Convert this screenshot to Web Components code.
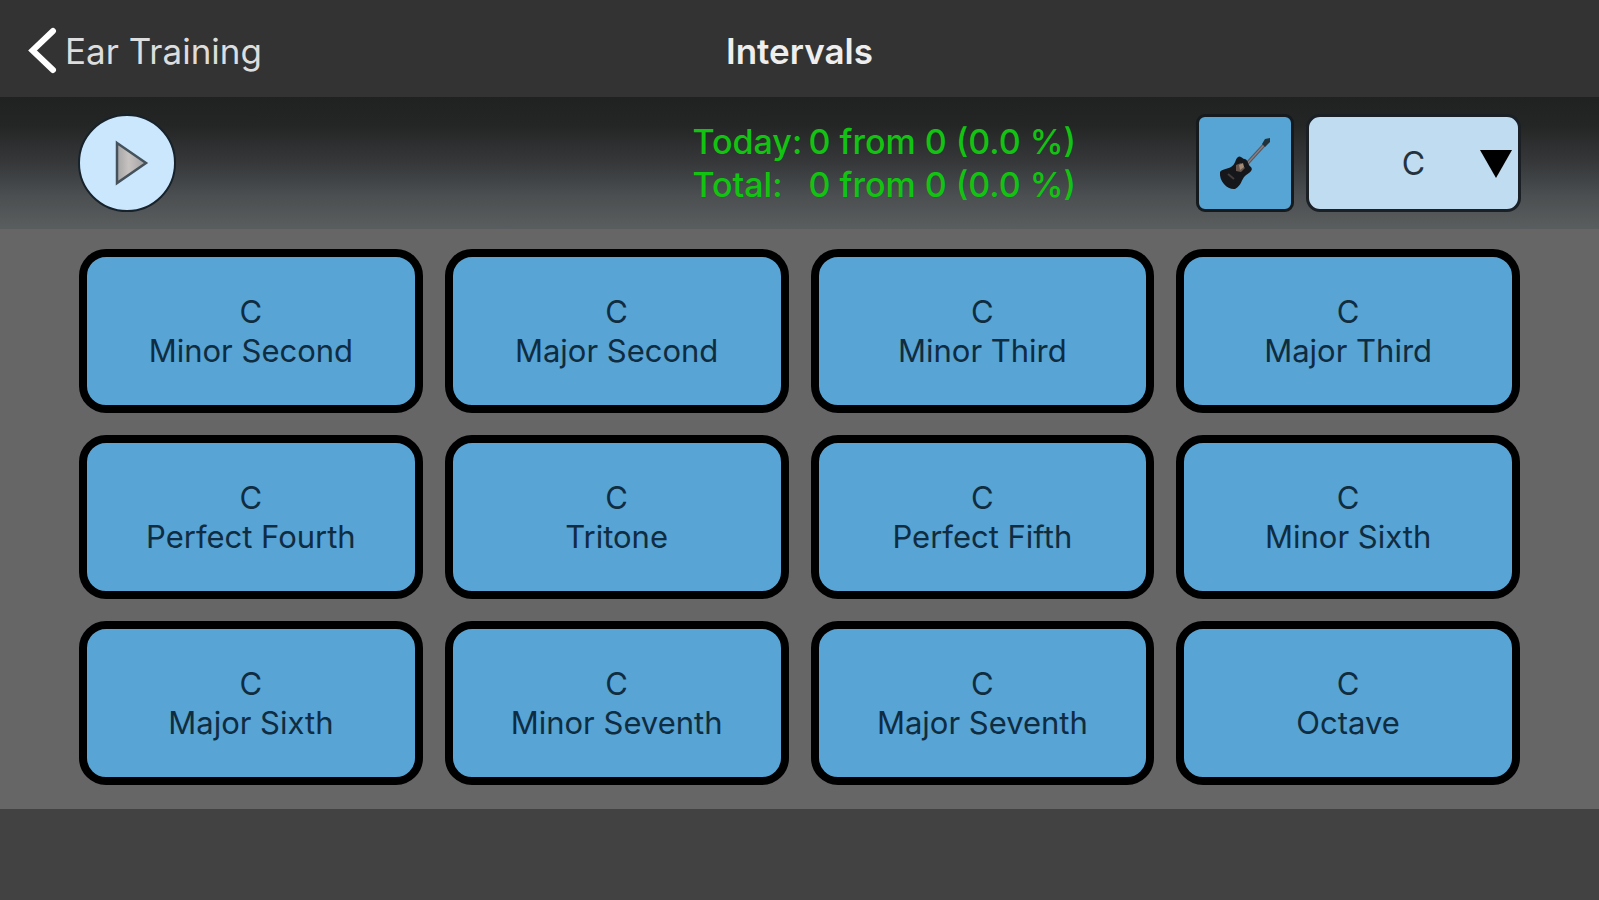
<!DOCTYPE html>
<html lang="en">
<head>
<meta charset="utf-8">
<title>Intervals</title>
<style>
html, body { margin: 0; background: #424242; }
body { font-family: Inter, "Liberation Sans", sans-serif; }
</style>
</head>
<body>
<ear-app></ear-app>

<script>
function define(name, html, setup) {
  const template = document.createElement('template');
  template.innerHTML = html;
  customElements.define(name, class extends HTMLElement {
    constructor() {
      super();
      this.attachShadow({ mode: 'open' }).append(template.content.cloneNode(true));
      if (setup) setup(this);
    }
  });
}

define('nav-bar', `
  <style>
    :host { display: grid; grid-template-columns: 1fr auto 1fr; align-items: center;
      height: 97px; padding: 4px 28px 0; box-sizing: border-box; background: #333; color: #eee; }
    a { display: flex; align-items: center; gap: 7px; justify-self: start;
      color: #ddd; text-decoration: none; font-size: 35px; line-height: 44px; }
    svg { width: 30px; height: 48px; }
    h1 { margin: 0; font-size: 35px; line-height: 44px; font-weight: 600; }
  </style>
  <a href="#ear-training">
    <svg viewBox="0 0 30 48" aria-hidden="true"><path d="M25 4 4.500 23.500 25 43" fill="none" stroke="#fff" stroke-width="6" stroke-linecap="round"/></svg>
    <slot name="back"></slot>
  </a>
  <h1><slot></slot></h1>
`);

define('play-button', `
  <style>
    :host { display: block; }
    button { display: grid; place-items: center; width: 98px; height: 98px; padding: 0;
      border: 2px solid #17222b; border-radius: 50%; background: #cbe7fd; }
    svg { width: 94px; height: 94px; }
  </style>
  <button type="button" aria-label="Play">
    <svg viewBox="0 0 94 94" aria-hidden="true">
      <defs><linearGradient id="g"><stop offset="0" stop-color="#a5a5a5"/><stop offset=".4" stop-color="#c6c2c0"/><stop offset="1" stop-color="#a2a2a2"/></linearGradient></defs>
      <path d="M37 27 66 47 37 67Z" fill="url(#g)" stroke="#45525b" stroke-width="2.500"/>
    </svg>
  </button>
`);

define('score-board', `
  <style>
    :host { display: block; color: #12c312; font-size: 34px; font-weight: 500; line-height: 43px; }
    dl { display: grid; grid-template-columns: 116px auto; margin: 0; white-space: nowrap; }
    dd { margin: 0; }
  </style>
  <dl>
    <dt>Today:</dt><dd>0 from 0 (0.0 %)</dd>
    <dt>Total:</dt><dd>0 from 0 (0.0 %)</dd>
  </dl>
`);

define('instrument-button', `
  <style>
    :host { display: block; }
    button { display: grid; place-items: center; width: 98px; height: 98px; padding: 0;
      border: 3px solid #151a1e; border-radius: 9px; background: #57a5d5; }
    svg { width: 92px; height: 92px; }
  </style>
  <button type="button" aria-label="Guitar">
    <svg viewBox="0 0 92 92" aria-hidden="true">
      <path d="M44 51 66 27" stroke="#56595f" stroke-width="3.500"/>
      <path d="M45 50 65 28" stroke="#8c7f84" stroke-width="1.200"/>
      <path d="M63 27 66 22 71 21 71 25 66 30Z" fill="#22333c"/>
      <path d="M21 55C23 52 28 52 32 50 37 47 36 42 39 40 42 38 43 42 46 42 50 44 48 47 52 50 55 54 49 56 46 59 42 63 43 68 36 72 29 73 20 65 21 55Z" fill="#15171a"/>
      <path d="M37 48 42 46 46 51 42 55 37 54Z" fill="#66564d"/>
      <path d="M40 48 44 46 45 50 41 53Z" fill="#a38b78"/>
      <path d="M29 57 35 62" stroke="#443c3a" stroke-width="2"/>
    </svg>
  </button>
`);

define('key-select', `
  <style>
    :host { display: block; position: relative; }
    select { appearance: none; display: block; width: 215px; height: 98px; padding: 0; margin: 0;
      border: 3px solid #1a2025; border-radius: 14px; background: #c0dcf0; color: #24323d;
      font: inherit; font-size: 32px; text-align: center; text-align-last: center; }
    svg { position: absolute; right: 9px; top: 36px; width: 32px; height: 28px; pointer-events: none; }
  </style>
  <select aria-label="Root note">
    <option>C</option><option>D</option><option>E</option><option>F</option><option>G</option><option>A</option><option>B</option>
  </select>
  <svg viewBox="0 0 32 28" aria-hidden="true"><path d="M0 0H32L16 28Z" fill="#000"/></svg>
`);

define('tool-bar', `
  <style>
    :host { display: flex; align-items: center; gap: 12px; height: 132px; box-sizing: border-box;
      padding: 0 78px;
      background: linear-gradient(#202222 0%, #242626 22%, #36383a 50%, #4b4f51 75%, #5a5e5f 100%); }
    score-board { margin: 0 108px 0 auto; }
  </style>
  <play-button></play-button>
  <score-board></score-board>
  <instrument-button></instrument-button>
  <key-select></key-select>
`);

define('interval-button', `
  <style>
    :host { display: block; }
    button { display: block; width: 100%; height: 164px; padding: 0; box-sizing: border-box;
      border: 8px solid #000; border-radius: 27px; background: #57a4d5; color: #102c40;
      font: inherit; font-size: 31px; line-height: 39px; }
    span { display: block; }
  </style>
  <button type="button"><span>C</span><span><slot></slot></span></button>
`);

define('interval-grid', `
  <style>
    :host { display: grid; grid-template-columns: repeat(4, 1fr); gap: 22px;
      padding: 20px 79px 24px; background: #666; }
  </style>
  <slot></slot>
`);

const INTERVALS = ['Minor Second', 'Major Second', 'Minor Third', 'Major Third',
  'Perfect Fourth', 'Tritone', 'Perfect Fifth', 'Minor Sixth',
  'Major Sixth', 'Minor Seventh', 'Major Seventh', 'Octave'];

define('ear-app', `
  <style>
    :host { display: block; min-height: 100vh; background: #424242; }
  </style>
  <nav-bar><span slot="back">Ear Training</span>Intervals</nav-bar>
  <tool-bar></tool-bar>
  <interval-grid>${INTERVALS.map(n => `<interval-button>${n}</interval-button>`).join('')}</interval-grid>
`);
</script>
</body>
</html>
